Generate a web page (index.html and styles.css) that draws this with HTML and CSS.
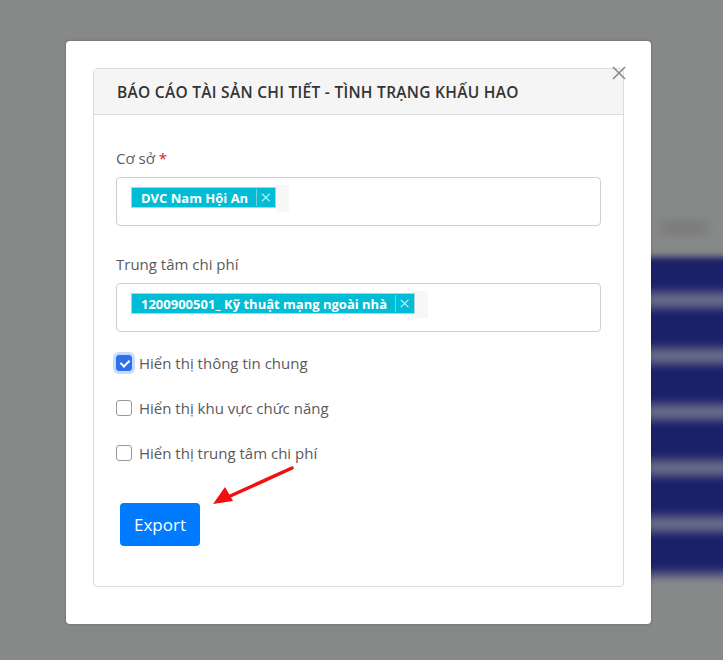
FILE: index.html
```html
<!DOCTYPE html>
<html lang="vi">
<head>
    <meta charset="UTF-8">
    <meta name="viewport" content="width=device-width, initial-scale=1.0">
    <title>Báo cáo tài sản chi tiết</title>
    <link rel="stylesheet" href="styles.css">
</head>
<body>
    <div class="backdrop">
        <div class="blur-text"></div>
        <div class="blur-table"></div>
    </div>

    <div class="overlay">
        <div class="modal">
            <button class="close" type="button" aria-label="Đóng">
                <svg width="14" height="14" viewBox="0 0 14 14">
                    <path d="M1 1 L13 13 M13 1 L1 13" stroke="#8a8a8a" stroke-width="1.6" fill="none"/>
                </svg>
            </button>

            <div class="card">
                <div class="card-header">BÁO CÁO TÀI SẢN CHI TIẾT - TÌNH TRẠNG KHẤU HAO</div>

                <form class="card-body" id="reportForm">
                    <div class="form-group">
                        <label class="field-label">Cơ sở <span class="req">*</span></label>
                        <div class="select-box">
                            <span class="tag">DVC Nam Hội An<span class="tag-x">×</span></span>
                            <span class="select-input"></span>
                        </div>
                    </div>

                    <div class="form-group">
                        <label class="field-label">Trung tâm chi phí</label>
                        <div class="select-box">
                            <span class="tag">1200900501_ Kỹ thuật mạng ngoài nhà<span class="tag-x">×</span></span>
                            <span class="select-input"></span>
                        </div>
                    </div>

                    <div class="checks">
                        <label class="check-row">
                            <input type="checkbox" class="check focused" checked>
                            <span>Hiển thị thông tin chung</span>
                        </label>
                        <label class="check-row">
                            <input type="checkbox" class="check">
                            <span>Hiển thị khu vực chức năng</span>
                        </label>
                        <label class="check-row">
                            <input type="checkbox" class="check">
                            <span>Hiển thị trung tâm chi phí</span>
                        </label>
                    </div>

                    <button type="submit" class="btn-export">Export</button>
                </form>
            </div>
        </div>
    </div>

    <!-- annotation arrow -->
    <svg class="arrow" width="90" height="50" viewBox="0 0 90 50">
        <path d="M84 4 L20 33" stroke="#f01010" stroke-width="3.5" stroke-linecap="round" fill="none"/>
        <path d="M5 40 L17 23 L25 37 Z" fill="#f01010"/>
    </svg>
</body>
</html>
```

FILE: styles.css
```css
* {
    margin: 0;
    padding: 0;
    box-sizing: border-box;
}

body {
    font-family: "Open Sans", "Noto Sans", Arial, sans-serif;
    background: #878888;
    color: #555;
    width: 723px;
    height: 660px;
    overflow: hidden;
    position: relative;
}

/* page behind the overlay, blurred */
.backdrop {
    position: absolute;
    inset: 0;
}

.blur-table {
    position: absolute;
    left: 600px;
    top: 257px;
    width: 140px;
    height: 322px;
    background: repeating-linear-gradient(180deg,
        #1c2069 0px,
        #1c2069 30px,
        #676a88 40px,
        #676a88 46px,
        #1c2069 56px);
    filter: blur(3px);
}

.blur-text {
    position: absolute;
    left: 662px;
    top: 222px;
    width: 44px;
    height: 12px;
    background: #787979;
    filter: blur(5px);
}

.overlay {
    position: relative;
    padding: 41px 0 0 66px;
}

.modal {
    position: relative;
    width: 585px;
    height: 583px;
    background: #fff;
    border-radius: 4px;
    padding: 27px 27px 37px 27px;
    box-shadow: 0 0 3px rgba(0, 0, 0, 0.25);
}

.close {
    position: absolute;
    top: 25px;
    right: 25px;
    background: transparent;
    border: none;
    width: 14px;
    height: 14px;
    cursor: pointer;
}

.close svg {
    display: block;
}

.card {
    height: 519px;
    border: 1px solid #dcdcdc;
    border-radius: 4px;
}

.card-header {
    height: 46px;
    background: #f5f5f5;
    border-bottom: 1px solid #dcdcdc;
    display: flex;
    align-items: center;
    padding-left: 23px;
    font-size: 15.5px;
    font-weight: 600;
    color: #333;
    letter-spacing: 0.28px;
}

.card-body {
    padding: 32px 22px 0 22px;
}

.form-group + .form-group {
    margin-top: 27px;
}

.field-label {
    display: block;
    font-size: 15px;
    line-height: 22px;
    margin-bottom: 8px;
    color: #5a5a5a;
}

.req {
    color: #e02020;
}

.select-box {
    height: 49px;
    border: 1px solid #cfcfcf;
    border-radius: 4px;
    padding: 9px 14px 0 14px;
    display: flex;
    align-items: flex-start;
}

.tag {
    display: inline-flex;
    align-items: center;
    height: 21px;
    background: #00bcd4;
    border: 1px solid #a9d6de;
    color: #fff;
    font-size: 13px;
    font-weight: 700;
    padding-left: 9px;
    white-space: nowrap;
}

.tag-x {
    margin-left: 8px;
    border-left: 1px solid #6fd2e0;
    padding: 0 4px 0 3px;
    font-weight: 300;
    font-size: 19px;
    line-height: 17px;
}

.select-input {
    width: 13px;
    height: 27px;
    margin-top: -2px;
    background: #f7f7f7;
}

.checks {
    margin-top: 20px;
    display: flex;
    flex-direction: column;
    gap: 23px;
}

.check-row {
    display: flex;
    align-items: center;
    height: 22px;
    font-size: 15px;
    color: #5a5a5a;
    cursor: pointer;
}

.check {
    appearance: none;
    width: 16px;
    height: 16px;
    border: 1px solid #9a9a9a;
    border-radius: 3px;
    margin-right: 7px;
    background: #fff;
    position: relative;
}

.check:checked {
    background: #2f6fe8;
    border-color: #2f6fe8;
}

.check:checked::before {
    content: "";
    position: absolute;
    left: 4.5px;
    top: 2px;
    width: 4px;
    height: 7px;
    border: solid #fff;
    border-width: 0 2px 2px 0;
    transform: rotate(45deg);
}

.check.focused {
    box-shadow: 0 0 0 3px #c5dbff;
}

.btn-export {
    margin-top: 39px;
    margin-left: 4px;
    width: 80px;
    height: 43px;
    background: #007bff;
    color: #fff;
    border: none;
    border-radius: 4px;
    font-family: inherit;
    font-size: 17px;
    cursor: pointer;
}

.arrow {
    position: absolute;
    left: 208px;
    top: 464px;
}
```
